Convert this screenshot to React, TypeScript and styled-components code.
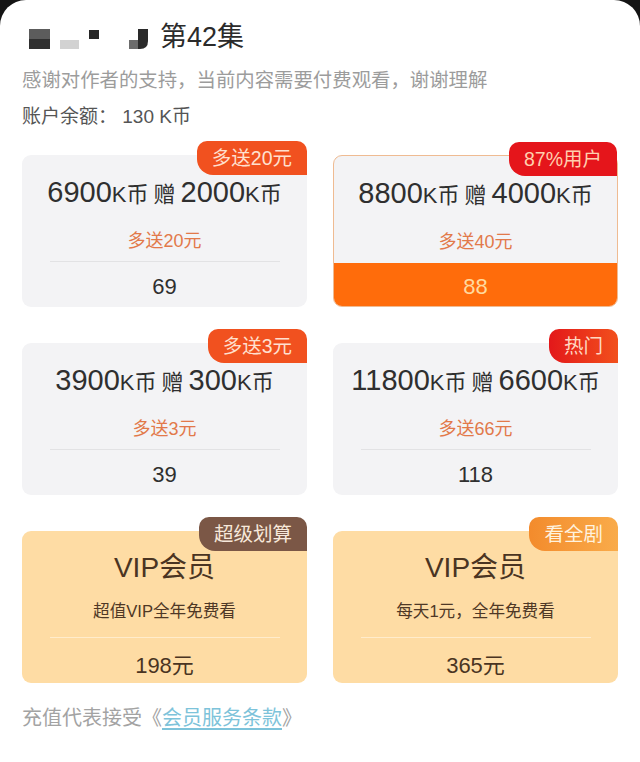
import React from 'react'
import styled, { createGlobalStyle, css } from 'styled-components'

const GlobalStyle = createGlobalStyle`
  html, body {
    margin: 0;
    padding: 0;
    background: #141414;
  }
  body {
    font-family: "Liberation Sans", "Noto Sans CJK SC", sans-serif;
  }
  * {
    box-sizing: border-box;
  }
`

type Tone = 'orange' | 'red' | 'hot' | 'brown' | 'amber'

type Plan = {
  kind: 'coin' | 'vip'
  base?: string
  bonus?: string
  title?: string
  note: string
  price: string
  badge: string
  tone: Tone
  selected?: boolean
}

const plans: Plan[] = [
  { kind: 'coin', base: '6900', bonus: '2000', note: '多送20元', price: '69', badge: '多送20元', tone: 'orange' },
  { kind: 'coin', base: '8800', bonus: '4000', note: '多送40元', price: '88', badge: '87%用户', tone: 'red', selected: true },
  { kind: 'coin', base: '3900', bonus: '300', note: '多送3元', price: '39', badge: '多送3元', tone: 'orange' },
  { kind: 'coin', base: '11800', bonus: '6600', note: '多送66元', price: '118', badge: '热门', tone: 'hot' },
  { kind: 'vip', title: 'VIP会员', note: '超值VIP全年免费看', price: '198元', badge: '超级划算', tone: 'brown' },
  { kind: 'vip', title: 'VIP会员', note: '每天1元，全年免费看', price: '365元', badge: '看全剧', tone: 'amber' },
]

// pixelated name in the title, drawn as blocks
const Censor = () => (
  <svg width="134" height="36" viewBox="0 0 134 36">
    <rect x="7" y="10" width="21" height="10" fill="#5c5c5c" />
    <rect x="7" y="20" width="21" height="10" fill="#2f2f2f" />
    <rect x="38" y="21" width="19" height="9" fill="#d2d2d2" />
    <rect x="67" y="11" width="10" height="9" fill="#262626" />
    <path d="M116 10 H126 V22 Q126 30 118 30 H116 Z" fill="#2a2a2a" />
    <rect x="107" y="21" width="9" height="9" fill="#6c6c6c" />
  </svg>
)

const App: React.FC = () => {
  return (
    <>
      <GlobalStyle />
      <Sheet>
        <TitleRow>
          <Censor />
          <Title>第42集</Title>
        </TitleRow>
        <Notice>感谢对作者的支持，当前内容需要付费观看，谢谢理解</Notice>
        <Balance>账户余额： 130 K币</Balance>

        <PlanGrid>
          {plans.map((p, i) => (
            <Card key={i} $vip={p.kind === 'vip'} $selected={!!p.selected}>
              <Badge $tone={p.tone}>{p.badge}</Badge>
              <CardTop>
                {p.kind === 'coin' ? (
                  <MainLine>
                    <Num>{p.base}</Num>
                    <Unit>K币</Unit>
                    <Gift>赠</Gift>
                    <Num>{p.bonus}</Num>
                    <Unit>K币</Unit>
                  </MainLine>
                ) : (
                  <VipTitle>{p.title}</VipTitle>
                )}
                <Note $vip={p.kind === 'vip'}>{p.note}</Note>
              </CardTop>
              {!p.selected && <Divider $vip={p.kind === 'vip'} />}
              <PriceBar $selected={!!p.selected} $vip={p.kind === 'vip'}>
                {p.price}
              </PriceBar>
            </Card>
          ))}
        </PlanGrid>

        <Terms>
          充值代表接受《<a href="#terms">会员服务条款</a>》
        </Terms>
      </Sheet>
    </>
  )
}

const Sheet = styled.div`
  min-height: 762px;
  background: #ffffff;
  border-radius: 26px 26px 0 0;
  padding: 19px 22px 0;
`

const TitleRow = styled.div`
  display: flex;
  align-items: center;
  height: 36px;
  gap: 4px;
`

const Title = styled.h1`
  margin: 0;
  font-size: 27px;
  font-weight: 400;
  line-height: 36px;
  color: #2b2b2b;
`

const Notice = styled.p`
  margin: 12px 0 0;
  font-size: 19.4px;
  line-height: 26px;
  color: #9c9c9c;
  white-space: nowrap;
`

const Balance = styled.p`
  margin: 11px 0 0;
  font-size: 19px;
  line-height: 26px;
  color: #555555;
`

const PlanGrid = styled.div`
  display: grid;
  grid-template-columns: 285px 285px;
  column-gap: 26px;
  row-gap: 36px;
  margin-top: 25px;
`

const Card = styled.div<{ $vip: boolean; $selected: boolean }>`
  position: relative;
  height: 152px;
  border-radius: 9px;
  display: flex;
  flex-direction: column;
  background: ${(p) => (p.$vip ? '#fedca4' : '#f3f3f5')};
  ${(p) =>
    p.$selected &&
    css`
      border: 1px solid #efbb92;
    `}
`

const badgeTones: Record<Tone, string> = {
  orange: 'background: #f1511f; color: #ffe0cf;',
  red: 'background: #e5151b; color: #ffcfae;',
  hot: 'background: linear-gradient(90deg, #e3181a, #f2501c); color: #ffd8c2;',
  brown: 'background: #7b5746; color: #f7e8da;',
  amber: 'background: linear-gradient(90deg, #f38b2c, #f9ab4a); color: #fff2de;',
}

const Badge = styled.span<{ $tone: Tone }>`
  position: absolute;
  top: -14px;
  right: 0;
  height: 34px;
  padding: 0 15px;
  line-height: 34px;
  font-size: 19.5px;
  border-radius: 10px 10px 0 16px;
  white-space: nowrap;
  ${(p) => badgeTones[p.$tone]}
`

const CardTop = styled.div`
  height: 106px;
  padding-top: 20px;
  display: flex;
  flex-direction: column;
  align-items: center;
`

const MainLine = styled.div`
  line-height: 34px;
  white-space: nowrap;
  color: #2f2f2f;
`

const Num = styled.span`
  font-size: 29px;
`

const Unit = styled.span`
  font-size: 22px;
`

const Gift = styled.span`
  font-size: 22px;
  margin: 0 5px;
`

const VipTitle = styled.div`
  font-size: 28px;
  line-height: 34px;
  color: #4a3422;
`

const Note = styled.div<{ $vip: boolean }>`
  margin-top: 15px;
  line-height: 24px;
  font-size: ${(p) => (p.$vip ? '16.6px' : '18px')};
  color: ${(p) => (p.$vip ? '#4f3826' : '#e2794a')};
  white-space: nowrap;
`

const Divider = styled.div<{ $vip: boolean }>`
  height: 1px;
  margin: 0 27px 0 28px;
  background: ${(p) => (p.$vip ? 'rgba(255, 240, 214, 0.8)' : '#e2e2e4')};
`

const PriceBar = styled.div<{ $selected: boolean; $vip: boolean }>`
  flex: 1;
  display: flex;
  align-items: center;
  justify-content: center;
  padding-top: 5px;
  font-size: 22px;
  color: ${(p) => (p.$vip ? '#4a3422' : '#2f2f2f')};
  ${(p) =>
    p.$selected &&
    css`
      margin-top: 1px;
      background: #ff6c0b;
      color: #ffd99e;
      border-radius: 0 0 8px 8px;
    `}
`

const Terms = styled.p`
  margin: 21px 0 0;
  font-size: 20px;
  line-height: 28px;
  color: #a3a3a3;
  white-space: nowrap;
  a {
    color: #7dc3da;
    text-decoration: underline;
    text-underline-offset: 3px;
  }
`

export default App
